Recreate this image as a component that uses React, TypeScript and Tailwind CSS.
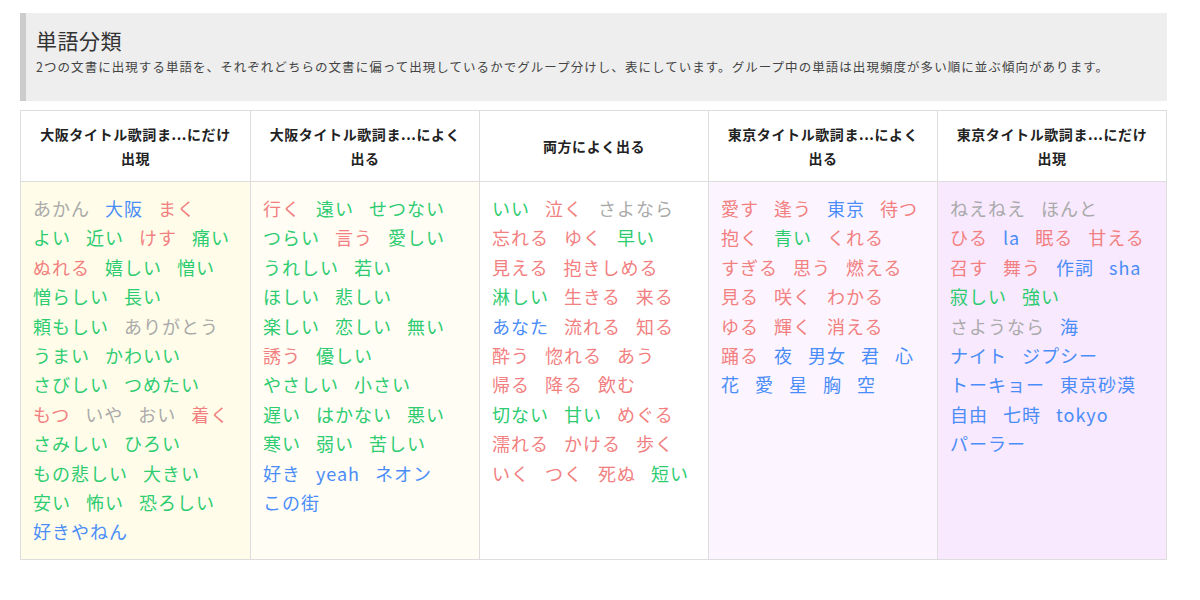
const C: Record<string, string> = {
  g: "text-[#aaaaaa]",
  b: "text-[#4b8df8]",
  r: "text-[#f28080]",
  G: "text-[#2ecc71]",
};

type W = [string, string];

// rows separated by "|", words by spaces, "word:colour"
const parse = (s: string): W[][] =>
  s.split("|").map((row) =>
    row
      .trim()
      .split(" ")
      .map((t) => {
        const [w, c] = t.split(":");
        return [w, c] as W;
      })
  );

const columns: { title: [string, string]; bg: string; rows: W[][] }[] = [
  {
    title: ["大阪タイトル歌詞ま...にだけ", "出現"],
    bg: "bg-[#fffde9]",
    rows: parse(
      "あかん:g 大阪:b まく:r | よい:G 近い:G けす:r 痛い:G | ぬれる:r 嬉しい:G 憎い:G | 憎らしい:G 長い:G | 頼もしい:G ありがとう:g | うまい:G かわいい:G | さびしい:G つめたい:G | もつ:r いや:g おい:g 着く:r | さみしい:G ひろい:G | もの悲しい:G 大きい:G | 安い:G 怖い:G 恐ろしい:G | 好きやねん:b"
    ),
  },
  {
    title: ["大阪タイトル歌詞ま...によく", "出る"],
    bg: "bg-[#fffdf4]",
    rows: parse(
      "行く:r 遠い:G せつない:G | つらい:G 言う:r 愛しい:G | うれしい:G 若い:G | ほしい:G 悲しい:G | 楽しい:G 恋しい:G 無い:G | 誘う:r 優しい:G | やさしい:G 小さい:G | 遅い:G はかない:G 悪い:G | 寒い:G 弱い:G 苦しい:G | 好き:b yeah:b ネオン:b | この街:b"
    ),
  },
  {
    title: ["両方によく出る", ""],
    bg: "bg-white",
    rows: parse(
      "いい:G 泣く:r さよなら:g | 忘れる:r ゆく:r 早い:G | 見える:r 抱きしめる:r | 淋しい:G 生きる:r 来る:r | あなた:b 流れる:r 知る:r | 酔う:r 惚れる:r あう:r | 帰る:r 降る:r 飲む:r | 切ない:G 甘い:G めぐる:r | 濡れる:r かける:r 歩く:r | いく:r つく:r 死ぬ:r 短い:G"
    ),
  },
  {
    title: ["東京タイトル歌詞ま...によく", "出る"],
    bg: "bg-[#fcf5ff]",
    rows: parse(
      "愛す:r 逢う:r 東京:b 待つ:r | 抱く:r 青い:G くれる:r | すぎる:r 思う:r 燃える:r | 見る:r 咲く:r わかる:r | ゆる:r 輝く:r 消える:r | 踊る:r 夜:b 男女:b 君:b 心:b | 花:b 愛:b 星:b 胸:b 空:b"
    ),
  },
  {
    title: ["東京タイトル歌詞ま...にだけ", "出現"],
    bg: "bg-[#f8e9ff]",
    rows: parse(
      "ねえねえ:g ほんと:g | ひる:r la:b 眠る:r 甘える:r | 召す:r 舞う:r 作詞:b sha:b | 寂しい:G 強い:G | さようなら:g 海:b | ナイト:b ジプシー:b | トーキョー:b 東京砂漠:b | 自由:b 七時:b tokyo:b | パーラー:b"
    ),
  },
];

export default function App() {
  return (
    <div
      className="w-[1200px] h-[600px] bg-white px-[20px] pt-[13px] text-[#333]"
      style={{ fontFamily: '"Noto Sans CJK JP", "Noto Sans", sans-serif' }}
    >
      <div className="w-[1147px] h-[88px] bg-[#eeeeee] border-l-[6px] border-[#cccccc] pl-[10px] pt-[12px]">
        <h1 className="text-[21px] leading-[30px] tracking-[0.5px] text-[#333]">単語分類</h1>
        <p className="mt-[2px] text-[12.5px] leading-[20px] tracking-[1.05px] text-[#444] whitespace-nowrap">
          2つの文書に出現する単語を、それぞれどちらの文書に偏って出現しているかでグループ分けし、表にしています。グループ中の単語は出現頻度が多い順に並ぶ傾向があります。
        </p>
      </div>
      <div className="mt-[9px] w-[1147px] grid grid-cols-5 border border-[#dddddd]">
        {columns.map((col, i) => (
          <div key={i} className={`flex flex-col ${i > 0 ? "border-l border-[#dddddd]" : ""}`}>
            <div className="h-[71px] flex flex-col items-center justify-center text-center text-[14px] leading-[24px] tracking-[0.6px] font-bold text-[#222] bg-white border-b border-[#dddddd]">
              <span className="whitespace-nowrap">{col.title[0]}</span>
              {col.title[1] && <span>{col.title[1]}</span>}
            </div>
            <div className={`h-[377px] ${col.bg} px-[12px] pt-[12px]`}>
              {col.rows.map((row, r) => (
                <div
                  key={r}
                  className="flex gap-x-[15px] text-[18px] leading-[29.4px] tracking-[1px] whitespace-nowrap"
                >
                  {row.map(([w, c], j) => (
                    <span key={j} className={C[c]}>
                      {w}
                    </span>
                  ))}
                </div>
              ))}
            </div>
          </div>
        ))}
      </div>
    </div>
  );
}
